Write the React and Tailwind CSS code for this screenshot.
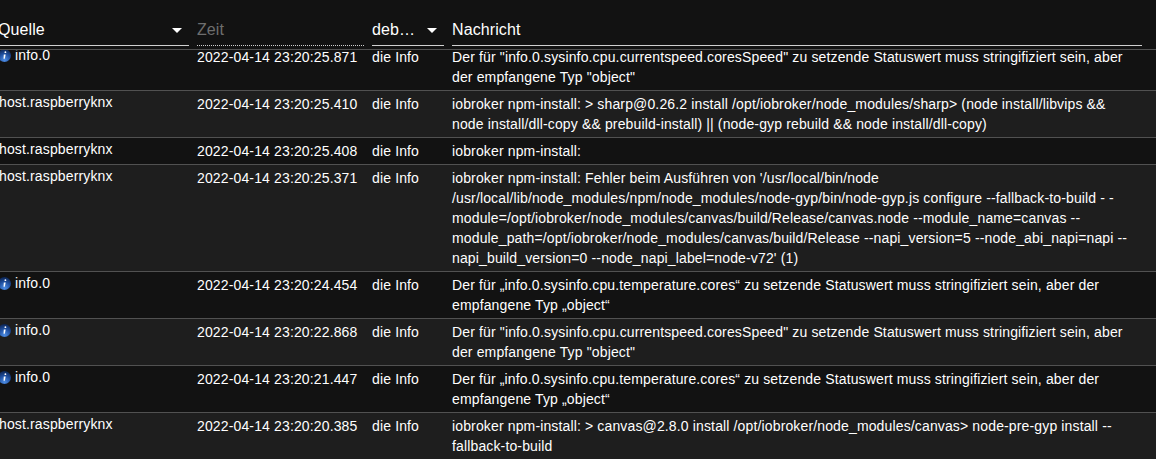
const rows = [
  { source: 'info.0', info: true, time: '2022-04-14 23:20:25.871', message: 'Der für "info.0.sysinfo.cpu.currentspeed.coresSpeed" zu setzende Statuswert muss stringifiziert sein, aber der empfangene Typ "object"' },
  { source: 'host.raspberryknx', time: '2022-04-14 23:20:25.410', message: 'iobroker npm-install: > sharp@0.26.2 install /opt/iobroker/node_modules/sharp> (node install/libvips && node install/dll-copy && prebuild-install) || (node-gyp rebuild && node install/dll-copy)' },
  { source: 'host.raspberryknx', time: '2022-04-14 23:20:25.408', message: 'iobroker npm-install:' },
  { source: 'host.raspberryknx', time: '2022-04-14 23:20:25.371', message: "iobroker npm-install: Fehler beim Ausführen von '/usr/local/bin/node /usr/local/lib/node_modules/npm/node_modules/node-gyp/bin/node-gyp.js configure --fallback-to-build - -module=/opt/iobroker/node_modules/canvas/build/Release/canvas.node --module_name=canvas --module_path=/opt/iobroker/node_modules/canvas/build/Release --napi_version=5 --node_abi_napi=napi --napi_build_version=0 --node_napi_label=node-v72' (1)" },
  { source: 'info.0', info: true, time: '2022-04-14 23:20:24.454', message: 'Der für „info.0.sysinfo.cpu.temperature.cores“ zu setzende Statuswert muss stringifiziert sein, aber der empfangene Typ „object“' },
  { source: 'info.0', info: true, time: '2022-04-14 23:20:22.868', message: 'Der für "info.0.sysinfo.cpu.currentspeed.coresSpeed" zu setzende Statuswert muss stringifiziert sein, aber der empfangene Typ "object"' },
  { source: 'info.0', info: true, time: '2022-04-14 23:20:21.447', message: 'Der für „info.0.sysinfo.cpu.temperature.cores“ zu setzende Statuswert muss stringifiziert sein, aber der empfangene Typ „object“' },
  { source: 'host.raspberryknx', time: '2022-04-14 23:20:20.385', message: 'iobroker npm-install: > canvas@2.8.0 install /opt/iobroker/node_modules/canvas> node-pre-gyp install --fallback-to-build' },
];

const Caret = () => (
  <svg width="10" height="5" viewBox="0 0 10 5" className="shrink-0">
    <path d="M0 0h10L5 5z" fill="#fff" />
  </svg>
);

const InfoIcon = ({ id }) => (
  <svg width="13" height="13" viewBox="0 0 13 13" className="mt-[4px] -ml-[2px] mr-[4px] shrink-0">
    <defs>
      <radialGradient id={id} cx="50%" cy="85%" r="85%">
        <stop offset="0%" stopColor="#4f8fe6" />
        <stop offset="55%" stopColor="#1f4f9f" />
        <stop offset="100%" stopColor="#0c2350" />
      </radialGradient>
    </defs>
    <circle cx="6.5" cy="6.5" r="6.5" fill={`url(#${id})`} />
    <circle cx="7.4" cy="3.2" r="0.9" fill="#fff" />
    <path d="M5.8 5.4h1.9L6.8 9.8h-1.3z" fill="#fff" />
  </svg>
);

const App = () => (
  <div className="h-[459px] w-[1156px] overflow-hidden bg-[#121212] font-['Liberation_Sans',Arial,sans-serif] text-sm leading-5 tracking-[0.14px] text-white">
    <div className="relative z-10 flex h-[50px] items-end border-b border-[#515151] bg-[#121212] pb-[3px] text-base tracking-[0.1px]">
      <div className="flex h-[33px] w-[189px] items-center justify-between border-b border-[#d0d0d0] pt-[2px] pr-[7px] -indent-[2px]">
        Quelle
        <Caret />
      </div>
      <div className="ml-[8px] flex h-[33px] w-[167px] items-center border-b border-dotted border-[#d0d0d0] pt-[2px] text-[#6e6e6e]">
        Zeit
      </div>
      <div className="ml-[8px] flex h-[33px] w-[72px] items-center justify-between border-b border-[#d0d0d0] pt-[2px] pr-[7px]">
        deb…
        <Caret />
      </div>
      <div className="ml-[8px] flex h-[33px] w-[690px] items-center border-b border-[#d0d0d0] pt-[2px]">
        Nachricht
      </div>
    </div>
    <div className="-mt-[6px]">
      {rows.map((row, i) => (
        <div
          key={i}
          className={`flex border-b border-[#515151] pt-[3px] pb-[3px] ${i % 2 ? 'bg-[#1e1e1e]' : 'bg-[#121212]'}`}
        >
          <div className="-mt-[2px] flex w-[197px] shrink-0 items-start">
            {row.info ? <InfoIcon id={`ball${i}`} /> : null}
            <span className={row.info ? '' : '-ml-[1px]'}>{row.source}</span>
          </div>
          <div className="w-[175px] shrink-0">{row.time}</div>
          <div className="w-[80px] shrink-0">die Info</div>
          <div className="w-[682px] shrink-0">{row.message}</div>
        </div>
      ))}
    </div>
  </div>
);

export default App;
